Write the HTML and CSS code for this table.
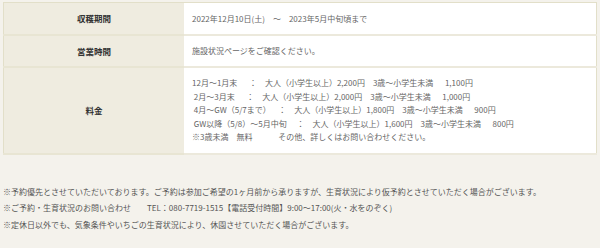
FILE: index.html
```html
<!DOCTYPE html>
<html lang="ja">
<head>
    <meta charset="UTF-8">
    <meta name="viewport" content="width=device-width, initial-scale=1.0">
    <title>いちご狩り 営業案内</title>
    <link rel="stylesheet" href="styles.css">
</head>
<body>

<table class="info-table">
    <tr class="row-short">
        <th>収穫期間</th>
        <td>2022年12月10日(土)　～　2023年5月中旬頃まで</td>
    </tr>
    <tr class="row-short">
        <th>営業時間</th>
        <td>施設状況ページをご確認ください。</td>
    </tr>
    <tr class="row-price">
        <th>料金</th>
        <td>
            <div class="price-list">
<p>12月～1月末　  ：　大人（小学生以上）2,200円　3歳～小学生未満　  1,100円</p>
<p> 2月～3月末　  ：　大人（小学生以上）2,000円　3歳～小学生未満　  1,000円</p>
<p> 4月～GW（5/7まで）　  ：　大人（小学生以上）1,800円　3歳～小学生未満　  900円</p>
<p> GW以降（5/8）～5月中旬　 ：　大人（小学生以上）1,600円　3歳～小学生未満　  800円</p>
<p>※3歳未満　無料　　　 その他、詳しくはお問い合わせください。</p>
            </div>
        </td>
    </tr>
</table>

<div class="notes">
    <p>※予約優先とさせていただいております。ご予約は参加ご希望の1ヶ月前から承りますが、生育状況により仮予約とさせていただく場合がございます。</p>
    <p>※ご予約・生育状況のお問い合わせ　　TEL：080-7719-1515【電話受付時間】9:00～17:00(火・水をのぞく)</p>
    <p>※定休日以外でも、気象条件やいちごの生育状況により、休園させていただく場合がございます。</p>
</div>

</body>
</html>
```

FILE: styles.css
```css
body {
    font-family: "Noto Sans CJK JP", sans-serif;
    background-color: #f4f2ec;
    color: #666;
    margin: 0;
    padding: 2px 3px;
    font-size: 8px;
}
.info-table {
    width: 100%;
    border-collapse: collapse;
    border: 1px solid #e2dfc9;
}
.info-table th {
    width: 178px;
    background-color: #efece0;
    color: #333;
    font-size: 8.5px;
    font-weight: bold;
    text-align: center;
    border-bottom: 2px solid #e8e5d3;
}
.info-table td {
    background-color: #fff;
    padding: 0 8px;
    border-bottom: 2px solid #ece9dc;
}
.row-short {
    height: 32px;
}
.row-price {
    height: 87px;
}
.price-list p {
    margin: 0;
    line-height: 13.4px;
    white-space: pre;
}
.notes {
    margin-top: 29px;
    color: #555;
}
.notes p {
    margin: 0;
    line-height: 16.6px;
}
```
